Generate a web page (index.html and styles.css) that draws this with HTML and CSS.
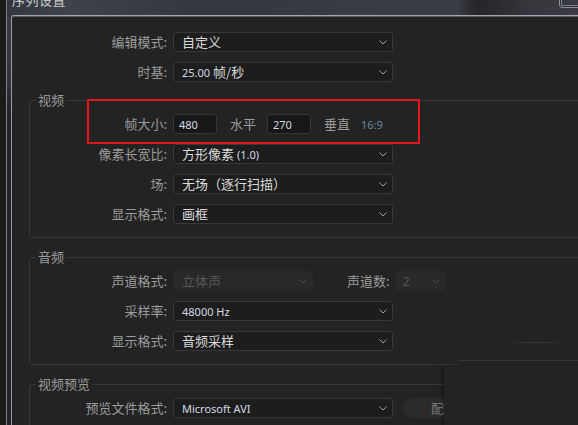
FILE: index.html
```html
<!DOCTYPE html>
<html lang="zh-CN">
<head>
<meta charset="utf-8">
<title>序列设置</title>
<link rel="stylesheet" href="styles.css">
</head>
<body>
<div class="screen">
  <div class="strip"></div>
  <div class="win">
    <div class="titlebar"><span class="title">序列设置</span><span class="close"></span></div>
    <div class="dialog">
      <div class="row">
        <span class="lbl">编辑模式:</span>
        <div class="sel"><span class="txt">自定义</span><svg class="chev" viewBox="0 0 8 5"><path d="M0.5 0.5 L4 4 L7.5 0.5"/></svg></div>
      </div>
      <div class="row">
        <span class="lbl">时基:</span>
        <div class="sel"><span class="txt"><span class="num">25.00</span> 帧/秒</span><svg class="chev" viewBox="0 0 8 5"><path d="M0.5 0.5 L4 4 L7.5 0.5"/></svg></div>
      </div>

      <fieldset class="grp first">
        <legend>视频</legend>
        <div class="row">
          <span class="lbl">帧大小:</span>
          <div class="inp"><span class="num">480</span></div>
          <span class="unit">水平</span>
          <div class="inp"><span class="num">270</span></div>
          <span class="unit">垂直</span>
          <span class="ratio">16:9</span>
        </div>
        <div class="row">
          <span class="lbl">像素长宽比:</span>
          <div class="sel"><span class="txt">方形像素 <span class="num">(1.0)</span></span><svg class="chev" viewBox="0 0 8 5"><path d="M0.5 0.5 L4 4 L7.5 0.5"/></svg></div>
        </div>
        <div class="row">
          <span class="lbl">场:</span>
          <div class="sel"><span class="txt">无场（逐行扫描）</span><svg class="chev" viewBox="0 0 8 5"><path d="M0.5 0.5 L4 4 L7.5 0.5"/></svg></div>
        </div>
        <div class="row">
          <span class="lbl">显示格式:</span>
          <div class="sel"><span class="txt">画框</span><svg class="chev" viewBox="0 0 8 5"><path d="M0.5 0.5 L4 4 L7.5 0.5"/></svg></div>
        </div>
      </fieldset>

      <fieldset class="grp">
        <legend>音频</legend>
        <div class="row">
          <span class="lbl">声道格式:</span>
          <div class="sel dis w140"><span class="txt">立体声</span><svg class="chev" viewBox="0 0 8 5"><path d="M0.5 0.5 L4 4 L7.5 0.5"/></svg></div>
          <span class="lbl2">声道数:</span>
          <div class="sel dis w50"><span class="txt"><span class="num">2</span></span><svg class="chev" viewBox="0 0 8 5"><path d="M0.5 0.5 L4 4 L7.5 0.5"/></svg></div>
        </div>
        <div class="row">
          <span class="lbl">采样率:</span>
          <div class="sel"><span class="txt"><span class="num">48000 Hz</span></span><svg class="chev" viewBox="0 0 8 5"><path d="M0.5 0.5 L4 4 L7.5 0.5"/></svg></div>
        </div>
        <div class="row">
          <span class="lbl">显示格式:</span>
          <div class="sel"><span class="txt">音频采样</span><svg class="chev" viewBox="0 0 8 5"><path d="M0.5 0.5 L4 4 L7.5 0.5"/></svg></div>
        </div>
      </fieldset>

      <fieldset class="grp">
        <legend>视频预览</legend>
        <div class="row">
          <span class="lbl">预览文件格式:</span>
          <div class="sel"><span class="txt"><span class="num">Microsoft AVI</span></span><svg class="chev" viewBox="0 0 8 5"><path d="M0.5 0.5 L4 4 L7.5 0.5"/></svg></div>
          <span class="btn">配置...</span>
        </div>
      </fieldset>
    </div>
  </div>
</div>
<div class="mark"></div>
<div class="cover-top"></div>
<div class="cover"></div>
<div class="faint"></div>
</body>
</html>
```
FILE: styles.css
```css
html, body {
  margin: 0;
  padding: 0;
}
body {
  width: 578px;
  height: 425px;
  overflow: hidden;
  position: relative;
  background: #1b1b1b;
  font-family: "Noto Sans CJK SC", "Noto Sans", sans-serif;
  font-size: 13px;
}
.screen {
  display: flex;
  height: 425px;
}
.strip {
  width: 6px;
  flex: none;
  background: #1b1b1b;
}
.win {
  flex: 1;
  min-width: 0;
  display: flex;
  flex-direction: column;
  border-left: 1px solid #7f838a;
  padding-left: 4px;
  background: linear-gradient(#3a3d44 0, #30343a 80px, #1f2227 112px, #1f2227 100%);
}
.titlebar {
  flex: none;
  height: 15px;
  margin-left: -4px;
  position: relative;
  overflow: hidden;
  background: linear-gradient(90deg, #34373d 0, #3f4249 60px, #33363c 200px, #393c43 380px, #3a3d44 450px, #242528 470px, #34363b 520px, #3a3c42 578px);
}
.title {
  display: block;
  margin-top: -8px;
  padding-left: 5px;
  font-size: 13px;
  line-height: 16px;
  letter-spacing: 0.5px;
  color: #c9cbce;
}
.close {
  position: absolute;
  right: -3px;
  top: -9px;
  width: 20px;
  height: 15px;
  border: 1px solid #8d9095;
  border-radius: 3px;
  box-shadow: inset 0 0 0 1px #2d2f34, inset 0 0 0 2px #7d8086;
}
.dialog {
  flex: none;
  background: #232323;
  border-left: 1px solid #9a9ea4;
  border-top: 1px solid #a3a7ad;
  border-top-left-radius: 3px;
  box-shadow: inset 0 1px 0 #55585d;
  padding-top: 16px;
  min-width: 0;
  min-height: 420px;
}
.row {
  display: flex;
  align-items: center;
  height: 20px;
  margin-bottom: 10px;
}
.row:last-child {
  margin-bottom: 0;
}
.lbl {
  width: 155px;
  flex: none;
  margin-right: 6px;
  text-align: right;
  color: #9c9c9c;
  line-height: 20px;
  white-space: nowrap;
}
.grp .lbl {
  width: 137px;
}
.lbl2 {
  margin: 0 6px 0 34px;
  color: #9c9c9c;
  line-height: 20px;
  white-space: nowrap;
}
.sel {
  width: 220px;
  height: 20px;
  flex: none;
  box-sizing: border-box;
  display: flex;
  align-items: center;
  padding: 0 5px 0 8px;
  background: #1d1d1d;
  border: 1px solid #383838;
  border-radius: 3px;
  color: #dadada;
}
.sel.w140 { width: 140px; }
.sel.w50 { width: 50px; padding-left: 6px; }
.sel.dis {
  background: #292929;
  border-color: #292929;
  color: #575757;
}
.txt {
  flex: 1;
  white-space: nowrap;
  line-height: 18px;
  overflow: hidden;
}
.num {
  font-family: "Noto Sans", sans-serif;
  font-size: 11px;
  color: #d3d9e3;
}
.dis .num { color: #555; font-size: 12px; }
.chev {
  width: 8px;
  height: 5px;
  flex: none;
}
.chev path {
  fill: none;
  stroke: #a0a0a0;
  stroke-width: 1;
}
.dis .chev path { stroke: #4e4e4e; }
.inp {
  width: 44px;
  height: 20px;
  flex: none;
  box-sizing: border-box;
  display: flex;
  align-items: center;
  padding-left: 5px;
  background: #171717;
  border: 1px solid #363636;
  border-radius: 3px;
}
.unit {
  margin: 0 11px 0 13px;
  color: #9c9c9c;
  line-height: 20px;
}
.ratio {
  font-family: "Noto Sans", sans-serif;
  font-size: 11px;
  color: #6d89a3;
}
.btn {
  margin-left: 10px;
  width: 70px;
  height: 20px;
  flex: none;
  box-sizing: border-box;
  padding-left: 28px;
  border-radius: 10px;
  background: #2b2b2b;
  color: #7a7a7a;
  line-height: 20px;
  white-space: nowrap;
}
fieldset.grp {
  margin: 11px -40px 0 17px;
  padding: 6px 0 13px 0;
  border: 1px solid #373737;
  border-radius: 3px;
  min-width: 0;
}
fieldset.grp.first {
  margin-top: 10px;
}
legend {
  margin-left: 6px;
  padding: 0 2px;
  font-size: 13px;
  line-height: 16px;
  color: #9c9c9c;
}
.mark {
  position: absolute;
  left: 87px;
  top: 99px;
  width: 333px;
  height: 45px;
  box-sizing: border-box;
  border: 2px solid #e6161e;
}
.cover-top {
  position: absolute;
  left: 459px;
  top: 360px;
  right: 0;
  height: 6px;
  background: #232323;
  border-top: 1px solid #363636;
}
.cover {
  position: absolute;
  left: 444px;
  top: 366px;
  right: 0;
  bottom: 0;
  background: #232323;
  box-shadow: -2px 0 3px rgba(0, 0, 0, 0.35);
}
.faint {
  position: absolute;
  left: 508px;
  top: 342px;
  width: 56px;
  height: 1px;
  background: linear-gradient(90deg, rgba(60,60,60,0), #383838 30%, #383838 70%, rgba(60,60,60,0));
}
```
